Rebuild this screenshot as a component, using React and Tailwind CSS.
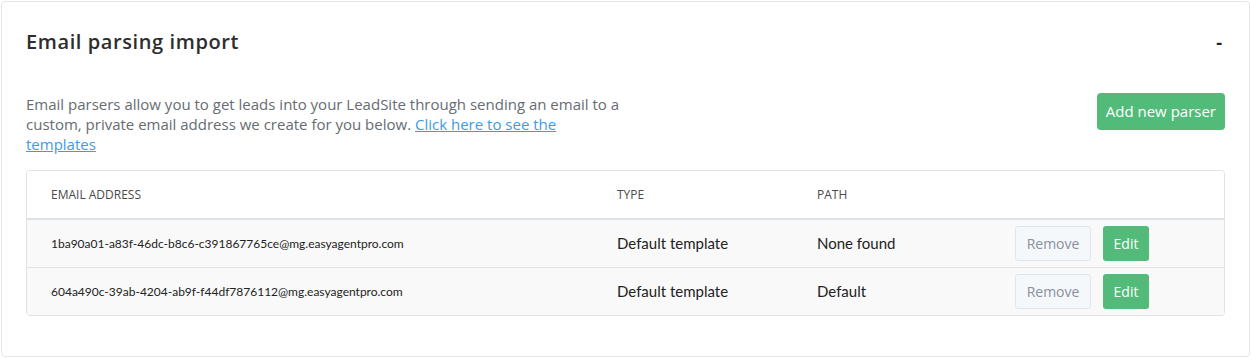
import React from "react";

const rows = [
    { email: "1ba90a01-a83f-46dc-b8c6-c391867765ce@mg.easyagentpro.com", type: "Default template", path: "None found" },
    { email: "604a490c-39ab-4204-ab9f-f44df7876112@mg.easyagentpro.com", type: "Default template", path: "Default" },
];

const App = () => {
    return (
        <div className="p-px bg-white" style={{ fontFamily: '"Open Sans", sans-serif' }}>
            <div className="h-[356px] border border-[#e4e7eb] rounded-[4px] pt-[26px] px-[24px]">
                <div className="flex items-center justify-between h-[28px]">
                    <h2 className="text-[20px] font-semibold text-[#2d2d2d] tracking-[0.6px]">Email parsing import</h2>
                    <span className="text-[18px] font-bold text-[#222] mr-[3px]">-</span>
                </div>

                <div className="flex justify-between items-start mt-[38px]">
                    <p className="w-[600px] text-[15px] leading-[20px] text-[#666c72]">
                        Email parsers allow you to get leads into your LeadSite through sending an email to a custom, private email address we create for you below.{" "}
                        <a href="#" className="text-[#3d9be9] underline">Click here to see the templates</a>
                    </p>
                    <button className="mt-[-1px] h-[37px] px-[9px] rounded-[4px] bg-[#52bb79] text-white text-[15px]">Add new parser</button>
                </div>

                <div className="mt-[16px] border border-[#dfe3e8] rounded-[4px] overflow-hidden">
                    <div className="flex items-center h-[49px] border-b-2 border-[#dfe3e8] text-[12px] text-[#4a4a4a] bg-white">
                        <div className="w-[590px] pl-[24px]">EMAIL ADDRESS</div>
                        <div className="w-[200px]">TYPE</div>
                        <div>PATH</div>
                    </div>
                    {rows.map((r, i) => (
                        <div key={i} className={"flex items-center bg-[#f9f9f9] " + (i === 0 ? "h-[48px] border-b border-[#dfe3e8]" : "h-[47px]")}>
                            <div className="w-[590px] pl-[24px] text-[12px] text-[#222]" style={{ fontFamily: 'Lato, sans-serif' }}>{r.email}</div>
                            <div className="w-[200px] text-[15px] text-[#222]" style={{ fontFamily: 'Lato, sans-serif' }}>{r.type}</div>
                            <div className="w-[198px] text-[15px] text-[#222]" style={{ fontFamily: 'Lato, sans-serif' }}>{r.path}</div>
                            <button className="h-[35px] w-[76px] rounded-[3px] border border-[#e1e6ec] bg-[#f5f8fb] text-[14px] text-[#8a8fa0]">Remove</button>
                            <button className="ml-[12px] h-[35px] w-[46px] rounded-[3px] bg-[#52bb79] text-[14px] text-white">Edit</button>
                        </div>
                    ))}
                </div>
            </div>
        </div>
    );
};

export default App;
